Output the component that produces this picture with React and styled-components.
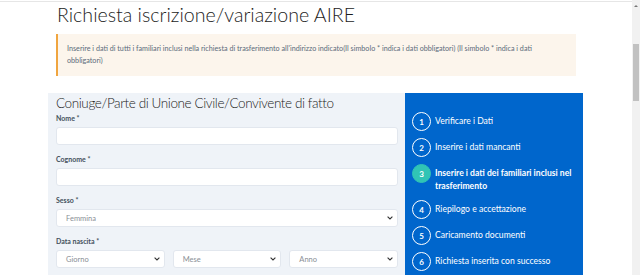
import React from 'react';
import styled, { createGlobalStyle } from 'styled-components';

const steps = [
    { n: 1, label: 'Verificare i Dati' },
    { n: 2, label: 'Inserire i dati mancanti' },
    { n: 3, label: 'Inserire i dati dei familiari inclusi nel trasferimento', active: true },
    { n: 4, label: 'Riepilogo e accettazione' },
    { n: 5, label: 'Caricamento documenti' },
    { n: 6, label: 'Richiesta inserita con successo' },
];

const Chevron = () => (
    <svg width="6" height="4" viewBox="0 0 6 4">
        <path d="M0.6 0.6 L3 3 L5.4 0.6" fill="none" stroke="#333" strokeWidth="1.1" />
    </svg>
);

const App = () => {
    return (
        <>
            <GlobalStyle />
            <Window>
                <Page>
                    <TopLine />
                    <Content>
                        <Title>Richiesta iscrizione/variazione AIRE</Title>
                        <Alert>
                            Inserire i dati di tutti i familiari inclusi nella richiesta di trasferimento
                            all'indirizzo indicato(Il simbolo * indica i dati obbligatori) (Il simbolo * indica
                            i dati obbligatori)
                        </Alert>
                        <Columns>
                            <FormPanel>
                                <Heading>Coniuge/Parte di Unione Civile/Convivente di fatto</Heading>
                                <Field>
                                    <Label>Nome *</Label>
                                    <Input />
                                </Field>
                                <Field>
                                    <Label>Cognome *</Label>
                                    <Input />
                                </Field>
                                <Field>
                                    <Label>Sesso *</Label>
                                    <Select>
                                        <span>Femmina</span>
                                        <Chevron />
                                    </Select>
                                </Field>
                                <Field>
                                    <Label>Data nascita *</Label>
                                    <DateRow>
                                        {['Giorno', 'Mese', 'Anno'].map((p) => (
                                            <Select key={p}>
                                                <span>{p}</span>
                                                <Chevron />
                                            </Select>
                                        ))}
                                    </DateRow>
                                </Field>
                            </FormPanel>
                            <StepsPanel>
                                {steps.map((s) => (
                                    <Step key={s.n}>
                                        <Circle active={s.active}>{s.n}</Circle>
                                        <StepText active={s.active}>{s.label}</StepText>
                                    </Step>
                                ))}
                            </StepsPanel>
                        </Columns>
                    </Content>
                </Page>
                <ScrollTrack>
                    <ScrollArrow />
                    <ScrollThumb />
                </ScrollTrack>
            </Window>
        </>
    );
};

export default App;

const GlobalStyle = createGlobalStyle`
    body {
        margin: 0;
        overflow: hidden;
        background: #fff;
        font-family: Lato, 'Open Sans', sans-serif;
    }
`;

const Window = styled.div`
    display: flex;
    height: 275px;
    overflow: hidden;
`;

const Page = styled.div`
    flex: 1;
    min-width: 0;
`;

const TopLine = styled.div`
    margin-top: 1px;
    height: 1px;
    background: #e6e6e6;
`;

const Content = styled.div`
    padding: 0 48px;
`;

const Title = styled.h1`
    margin: 0 0 7px 9px;
    height: 25px;
    font-size: 19.6px;
    line-height: 25px;
    font-weight: 300;
    color: #1c1c1c;
`;

const Alert = styled.div`
    margin: 0 8px;
    padding: 9px 30px 9px 9px;
    background: #fcf5ec;
    border-left: 2px solid #f0a53f;
    font-size: 7.2px;
    line-height: 12px;
    color: #5b6b7b;
`;

const Columns = styled.div`
    display: grid;
    grid-template-columns: 357px 178px;
    margin-top: 17px;
`;

const FormPanel = styled.div`
    background: #eff3f8;
    padding: 0 7px 10px 8px;
`;

const Heading = styled.h2`
    margin: 0;
    font-size: 13.5px;
    line-height: 20px;
    font-weight: 300;
    letter-spacing: -0.4px;
    color: #222;
`;

const Field = styled.div`
    margin-bottom: 9px;
`;

const Label = styled.div`
    font-size: 7px;
    line-height: 10px;
    font-weight: 700;
    color: #44505c;
    margin-bottom: 4px;
`;

const Input = styled.div`
    height: 18px;
    box-sizing: border-box;
    background: #fff;
    border: 1px solid #e2e7ee;
    border-radius: 3px;
`;

const Select = styled(Input)`
    display: flex;
    align-items: center;
    justify-content: space-between;
    padding: 0 4px 0 9px;
    font-size: 7.5px;
    color: #8a8f96;
`;

const DateRow = styled.div`
    display: grid;
    grid-template-columns: repeat(3, 1fr);
    gap: 8px;
`;

const StepsPanel = styled.div`
    background: #0066cc;
    padding: 19px 8px 10px 7px;
    display: flex;
    flex-direction: column;
    gap: 7px;
`;

const Step = styled.div`
    display: flex;
    align-items: flex-start;
    gap: 4px;
`;

const Circle = styled.div`
    flex: none;
    width: 19px;
    height: 19px;
    box-sizing: border-box;
    border-radius: 50%;
    border: 1.5px solid ${(p) => (p.active ? '#30c4b5' : '#fff')};
    background: ${(p) => (p.active ? '#30c4b5' : 'transparent')};
    color: #fff;
    font-size: 8px;
    font-weight: 700;
    display: flex;
    align-items: center;
    justify-content: center;
`;

const StepText = styled.div`
    padding-top: 3px;
    font-size: 8.6px;
    line-height: 13px;
    color: #fff;
    font-weight: ${(p) => (p.active ? 700 : 400)};
`;

const ScrollTrack = styled.div`
    width: 8px;
    background: #f1f1f1;
    display: flex;
    flex-direction: column;
    align-items: center;
`;

const ScrollArrow = styled.div`
    margin-top: 5px;
    width: 0;
    height: 0;
    border-left: 2px solid transparent;
    border-right: 2px solid transparent;
    border-bottom: 2px solid #777;
`;

const ScrollThumb = styled.div`
    margin-top: 37px;
    width: 6px;
    height: 57px;
    background: #c1c1c1;
`;
